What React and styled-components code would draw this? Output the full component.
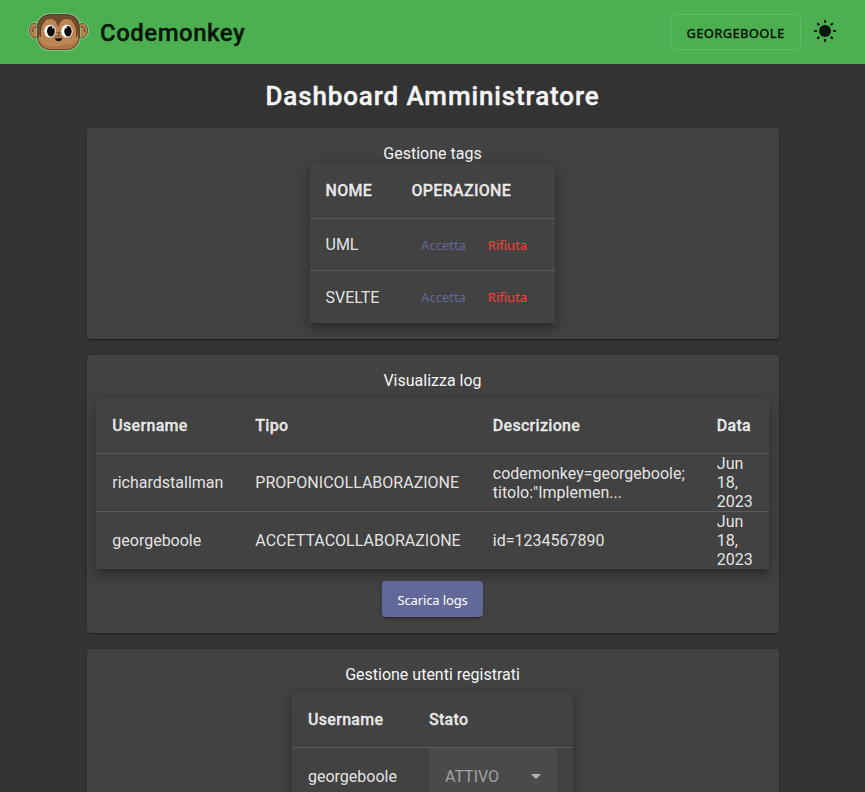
import React from "react";
import styled, { createGlobalStyle } from "styled-components";

const GlobalStyle = createGlobalStyle`
  * { box-sizing: border-box; }
  html, body { margin: 0; height: 100%; overflow: hidden; }
  body { background: #333; color: #f5f5f5; font-family: Roboto, sans-serif; font-size: 16px; }
`;

const Page = styled.div`
  height: 792px;
  overflow: hidden;
  display: flex;
  flex-direction: column;
  align-items: center;
`;

const Toolbar = styled.header`
  width: 100%;
  height: 64px;
  flex: none;
  display: flex;
  align-items: center;
  padding: 0 16px 0 28px;
  background: #4caf50;
  color: rgba(0, 0, 0, 0.87);
`;

const Logo = styled.svg`
  width: 61px;
  height: 38px;
  display: block;
`;

const Brand = styled.h1`
  margin: 2px auto 0 11px;
  font-size: 24px;
  line-height: 32px;
  font-weight: 500;
  letter-spacing: 0.5px;
  -webkit-text-stroke: 0.4px currentColor;
`;

const Button = styled.button`
  height: 36px;
  border: 0;
  border-radius: 4px;
  background: transparent;
  color: inherit;
  font: 400 13px/34px "Noto Sans", sans-serif;
  padding: 0;
`;

const UserButton = styled(Button)`
  width: 131px;
  border: 1px solid rgba(255, 255, 255, 0.12);
  font-weight: 500;
  letter-spacing: 0.3px;
  line-height: 36px;
  -webkit-text-stroke: 0.3px currentColor;
`;

const SunIcon = styled.svg`
  width: 24px;
  height: 24px;
  margin: 0 12px 2px;
  fill: currentColor;
`;

const Title = styled.h2`
  margin: 16px 0;
  font-size: 26px;
  line-height: 32px;
  font-weight: 500;
  letter-spacing: 0.88px;
  -webkit-text-stroke: 0.4px currentColor;
`;

const Card = styled.section`
  width: 692px;
  height: ${(p) => p.$height}px;
  flex: none;
  margin-bottom: 16px;
  padding-top: 16px;
  display: flex;
  flex-direction: column;
  align-items: center;
  background: #424242;
  border-radius: 4px;
  box-shadow: 0 2px 1px -1px rgba(0, 0, 0, 0.2), 0 1px 1px rgba(0, 0, 0, 0.14), 0 1px 3px rgba(0, 0, 0, 0.12);
`;

const CardTitle = styled.div`
  line-height: 19px;
  margin-bottom: ${(p) => p.$gap}px;
`;

const Table = styled.table`
  width: ${(p) => p.$width}px;
  flex: none;
  table-layout: fixed;
  border-spacing: 0;
  background: #424242;
  color: rgba(255, 255, 255, 0.87);
  box-shadow: 0 5px 5px -3px rgba(0, 0, 0, 0.2), 0 8px 10px 1px rgba(0, 0, 0, 0.14), 0 3px 14px 2px rgba(0, 0, 0, 0.12);
  --inset: ${(p) => p.$inset || 16}px;
`;

const Col = styled.col`
  width: ${(p) => p.$width}px;
`;

const HeadCell = styled.th`
  height: 56px;
  padding: 0 0 0 var(--inset);
  text-align: left;
  font-weight: 500;
  letter-spacing: 0.3px;
  -webkit-text-stroke: 0.3px currentColor;
  border-bottom: 1px solid #5c5c5c;
`;

const Cell = styled.td`
  height: ${(p) => p.$height || 52}px;
  padding: 0 0 0 var(--inset);
  line-height: 19px;
  white-space: pre-line;
  border-bottom: ${(p) => (p.$last ? "0" : "1px solid #5c5c5c")};
`;

const Actions = styled.div`
  display: flex;
`;

const TextButton = styled(Button)`
  width: 64px;
  color: ${(p) => p.$color};
  line-height: ${(p) => (p.$last ? 36 : 34)}px;
`;

const RaisedButton = styled(Button)`
  width: 101px;
  margin-top: 12px;
  background: #62699a;
  color: #fff;
  line-height: 36px;
  padding-top: 1px;
  letter-spacing: -0.13px;
  box-shadow: 0 3px 1px -2px rgba(0, 0, 0, 0.2), 0 2px 2px rgba(0, 0, 0, 0.14), 0 1px 5px rgba(0, 0, 0, 0.12);
`;

const Select = styled.div`
  width: 128px;
  height: 56px;
  padding: 0 16px;
  display: flex;
  align-items: center;
  justify-content: space-between;
  background: #4a4a4a;
  color: #a3a3a3;
  border-radius: 4px 4px 0 0;
`;

const Arrow = styled.svg`
  width: 10px;
  height: 5px;
  fill: #b5b5b5;
`;

const MonkeyLogo = () => (
  <Logo viewBox="0 0 61 38">
    <g fill="#b97f4d" stroke="#8fc792" strokeWidth="1.6">
      <ellipse cx="7.3" cy="17.5" rx="6.5" ry="7.7" />
      <ellipse cx="53.7" cy="17.5" rx="6.5" ry="7.7" />
      <rect x="9" y="1" width="43" height="36.2" rx="13" />
    </g>
    <rect x="9.6" y="1.6" width="41.8" height="35" rx="12.5" fill="#bd8552" />
    <path d="M10 24C13 33 19 34 30 33c11-1 17-2 21-9v3c-1 6.5-6 9.6-12 9.600H22C15 36.600 10 33 10 27z" fill="#ab7748" />
    <path d="M9.600 26V14C9.600 6 15 1.600 22 1.600h17c7 0 12.400 4.400 12.400 12.400v12c-1.800-2-2-5-2.600-9C48 10 44 6 38.500 6c-4.500 0-6.500 3.500-8.200 8.300C28.500 9.500 26.500 6 22.500 6 17 6 13.500 10 12.700 17c-.6 4-1.300 7-3.100 9z" fill="#6f4d2c" />
    <g fill="none" stroke="#3b2918" strokeWidth=".7">
      <rect x="9.6" y="1.6" width="41.8" height="35" rx="12.5" />
      <path d="M9.500 11.500C4.500 8.500 1.500 12.500 1.500 17.500s3.500 8.500 8 7M51.500 11.500c5-3 8 1 8 6s-3.500 8.500-8 7M4.500 19c-.5-3.500 1.500-6 4.500-5M56.500 19c.5-3.500-1.500-6-4.500-5M12.500 24c-.3-8 .5-13 4.500-15.500M48.500 24c.3-8-.5-13-4.500-15.500" />
      <path d="M28 20c1.500-.8 4-.8 5.500 0M27.500 23.300c1.500.4 2.600-.3 3.200-1.300.6 1 1.600 1.700 3 1.300M30.600 20v5" strokeWidth=".5" />
    </g>
    <g fill="#fff">
      <ellipse cx="22" cy="18.2" rx="5.7" ry="6.4" />
      <ellipse cx="38.9" cy="18.2" rx="5.7" ry="6.4" />
    </g>
    <g fill="#080808">
      <ellipse cx="22.900" cy="18.3" rx="3.9" ry="5.3" />
      <ellipse cx="40" cy="18.3" rx="3.7" ry="5.3" />
      <path d="M27 24.800c2.200 1 5 1 7.300 0-.5 2.600-2 3.500-3.800 3.500-1.700 0-3-.9-3.500-3.500z" />
    </g>
    <circle cx="24.800" cy="14.600" r=".8" fill="#fff" />
    <circle cx="38" cy="14.600" r=".9" fill="#fff" />
  </Logo>
);

const tags = ["UML", "SVELTE"];
const logs = [
  ["richardstallman", "PROPONICOLLABORAZIONE", 'codemonkey=georgeboole;\ntitolo:"Implemen...', "Jun\n18,\n2023"],
  ["georgeboole", "ACCETTACOLLABORAZIONE", "id=1234567890", "Jun\n18,\n2023"],
];

const Columns = ({ widths }) => (
  <colgroup>{widths.map((w, i) => <Col key={i} $width={w} />)}</colgroup>
);

const Head = ({ labels }) => (
  <thead><tr>{labels.map((l) => <HeadCell key={l}>{l}</HeadCell>)}</tr></thead>
);

export default function App() {
  return (
    <Page>
      <GlobalStyle />
      <Toolbar>
        <MonkeyLogo />
        <Brand>Codemonkey</Brand>
        <UserButton>GEORGEBOOLE</UserButton>
        <SunIcon viewBox="0 0 24 24">
          <circle cx="12" cy="12" r="6" />
          <path d="M11 1h2v3h-2zM11 20h2v3h-2zM1 11h3v2H1zM20 11h3v2h-3zM5 3.600l1.900 1.900-1.400 1.400L3.600 5zM19 3.600L20.400 5l-1.900 1.900-1.400-1.400zM5.500 17.100l1.400 1.400L5 20.400 3.600 19zM18.500 17.100l1.900 1.900-1.400 1.400-1.900-1.900z" />
        </SunIcon>
      </Toolbar>
      <Title>Dashboard Amministratore</Title>

      <Card $height={211}>
        <CardTitle $gap={0}>Gestione tags</CardTitle>
        <Table $width={245} $inset={15.5}>
          <Columns widths={[86, 159]} />
          <Head labels={["NOME", "OPERAZIONE"]} />
          <tbody>
            {tags.map((tag, i) => (
              <tr key={tag}>
                <Cell $last={i === 1}>{tag}</Cell>
                <Cell $last={i === 1}>
                  <Actions>
                    <TextButton $color="#62699a" $last={i === 1}>Accetta</TextButton>
                    <TextButton $color="#f44336" $last={i === 1}>Rifiuta</TextButton>
                  </Actions>
                </Cell>
              </tr>
            ))}
          </tbody>
        </Table>
      </Card>

      <Card $height={278}>
        <CardTitle $gap={8}>Visualizza log</CardTitle>
        <Table $width={673} $inset={16.3}>
          <Columns widths={[143, 237.5, 224, 68.5]} />
          <Head labels={["Username", "Tipo", "Descrizione", "Data"]} />
          <tbody>
            {logs.map((row, i) => (
              <tr key={row[0]}>
                {row.map((text) => (
                  <Cell key={text} $height={i === 1 ? 57 : 58} $last={i === 1}>{text}</Cell>
                ))}
              </tr>
            ))}
          </tbody>
        </Table>
        <RaisedButton>Scarica logs</RaisedButton>
      </Card>

      <Card $height={220}>
        <CardTitle $gap={8}>Gestione utenti registrati</CardTitle>
        <Table $width={281}>
          <Columns widths={[121, 160]} />
          <Head labels={["Username", "Stato"]} />
          <tbody>
            <tr>
              <Cell $height={57}>georgeboole</Cell>
              <Cell $height={57}>
                <Select>
                  ATTIVO
                  <Arrow viewBox="0 0 10 5"><path d="M0 0h10L5 5z" /></Arrow>
                </Select>
              </Cell>
            </tr>
          </tbody>
        </Table>
      </Card>
    </Page>
  );
}
